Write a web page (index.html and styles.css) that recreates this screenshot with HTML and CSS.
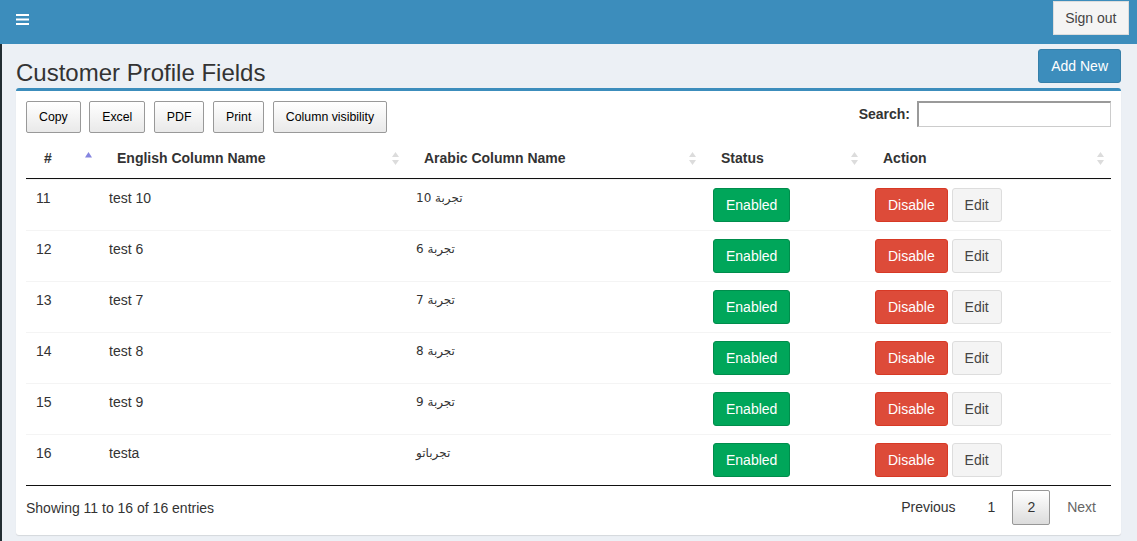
FILE: index.html
```html
<!DOCTYPE html>
<html>
<head>
<meta charset="utf-8">
<title>Customer Profile Fields</title>
<link rel="stylesheet" href="styles.css">
</head>
<body>
<header class="topbar">
  <a class="menu-toggle" href="#">
    <svg width="13" height="11" viewBox="0 0 13 11"><rect x="0" y="0" width="13" height="2" fill="#fff"/><rect x="0" y="4.5" width="13" height="2" fill="#fff"/><rect x="0" y="9" width="13" height="2" fill="#fff"/></svg>
  </a>
  <button class="btn btn-default signout">Sign out</button>
</header>
<main class="wrapper">
  <div class="content-header">
    <h1>Customer Profile Fields</h1>
    <button class="btn btn-primary">Add New</button>
  </div>
  <section class="box">
    <div class="toolbar">
      <div class="dt-buttons">
        <button class="dt-button">Copy</button>
        <button class="dt-button">Excel</button>
        <button class="dt-button">PDF</button>
        <button class="dt-button">Print</button>
        <button class="dt-button">Column visibility</button>
      </div>
      <label class="filter">Search: <input type="search"></label>
    </div>
    <table class="data">
      <colgroup><col class="c1"><col class="c2"><col class="c3"><col class="c4"><col class="c5"></colgroup>
      <thead>
        <tr>
          <th>#<span class="sort"><svg width="7" height="13" viewBox="0 0 7 13"><polygon points="3.5,0 7,5.5 0,5.5" fill="#8585e0"/></svg></span></th>
          <th>English Column Name<span class="sort"><svg width="7" height="13" viewBox="0 0 7 13"><polygon points="3.5,0 7,5 0,5" fill="#dcdcdc"/><polygon points="0,8 7,8 3.5,13" fill="#dcdcdc"/></svg></span></th>
          <th>Arabic Column Name<span class="sort"><svg width="7" height="13" viewBox="0 0 7 13"><polygon points="3.5,0 7,5 0,5" fill="#dcdcdc"/><polygon points="0,8 7,8 3.5,13" fill="#dcdcdc"/></svg></span></th>
          <th>Status<span class="sort"><svg width="7" height="13" viewBox="0 0 7 13"><polygon points="3.5,0 7,5 0,5" fill="#dcdcdc"/><polygon points="0,8 7,8 3.5,13" fill="#dcdcdc"/></svg></span></th>
          <th>Action<span class="sort"><svg width="7" height="13" viewBox="0 0 7 13"><polygon points="3.5,0 7,5 0,5" fill="#dcdcdc"/><polygon points="0,8 7,8 3.5,13" fill="#dcdcdc"/></svg></span></th>
        </tr>
      </thead>
      <tbody>
        <tr><td>11</td><td>test 10</td><td class="ar">تجربة 10</td><td><button class="btn btn-success">Enabled</button></td><td><button class="btn btn-danger">Disable</button> <button class="btn btn-default">Edit</button></td></tr>
        <tr><td>12</td><td>test 6</td><td class="ar">تجربة 6</td><td><button class="btn btn-success">Enabled</button></td><td><button class="btn btn-danger">Disable</button> <button class="btn btn-default">Edit</button></td></tr>
        <tr><td>13</td><td>test 7</td><td class="ar">تجربة 7</td><td><button class="btn btn-success">Enabled</button></td><td><button class="btn btn-danger">Disable</button> <button class="btn btn-default">Edit</button></td></tr>
        <tr><td>14</td><td>test 8</td><td class="ar">تجربة 8</td><td><button class="btn btn-success">Enabled</button></td><td><button class="btn btn-danger">Disable</button> <button class="btn btn-default">Edit</button></td></tr>
        <tr><td>15</td><td>test 9</td><td class="ar">تجربة 9</td><td><button class="btn btn-success">Enabled</button></td><td><button class="btn btn-danger">Disable</button> <button class="btn btn-default">Edit</button></td></tr>
        <tr><td>16</td><td>testa</td><td class="ar">تجرباتو</td><td><button class="btn btn-success">Enabled</button></td><td><button class="btn btn-danger">Disable</button> <button class="btn btn-default">Edit</button></td></tr>
      </tbody>
    </table>
    <div class="table-footer">
      <div class="info">Showing 11 to 16 of 16 entries</div>
      <div class="paginate">
        <a class="pg" href="#">Previous</a>
        <a class="pg" href="#">1</a>
        <a class="pg current" href="#">2</a>
        <a class="pg disabled" href="#">Next</a>
      </div>
    </div>
  </section>
</main>
</body>
</html>
```
FILE: styles.css
```css
* { box-sizing: border-box; }
html, body { margin: 0; height: 100%; overflow: hidden; }
body {
  font-family: "Liberation Sans", Arial, "DejaVu Sans", sans-serif;
  font-size: 14px;
  line-height: 20px;
  color: #333;
  background: #ecf0f5;
}
.topbar {
  height: 44px;
  background: #3c8dbc;
  display: flex;
  justify-content: space-between;
  align-items: flex-start;
}
.menu-toggle { display: block; margin: 14px 0 0 16px; line-height: 0; }
.btn {
  font-family: inherit;
  font-size: 14px;
  line-height: 20px;
  padding: 6px 12px;
  border: 1px solid transparent;
  border-radius: 3px;
  cursor: pointer;
  vertical-align: top;
}
.btn-default { background: #f4f4f4; border-color: #ddd; color: #444; }
.btn-primary { background: #3c8dbc; border-color: #367fa9; color: #fff; }
.btn-success { background: #00a65a; border-color: #008d4c; color: #fff; }
.btn-danger { background: #dd4b39; border-color: #d73925; color: #fff; }
.signout { margin: 1px 8px 0 0; border-radius: 0; height: 34px; padding: 6px 11.5px; }
.wrapper {
  height: calc(100% - 44px);
  border-left: 2px solid #222d32;
  padding: 0 16px 0 14px;
}
.content-header {
  display: flex;
  justify-content: space-between;
  align-items: flex-start;
  height: 44px;
}
.content-header h1 {
  margin: 16px 0 0 0;
  font-size: 24px;
  line-height: 26px;
  font-weight: normal;
  color: #333;
}
.content-header .btn { margin-top: 5px; height: 34px; }
.box {
  background: #fff;
  border-top: 3px solid #3c8dbc;
  border-radius: 3px;
  box-shadow: 0 1px 1px rgba(0,0,0,0.1);
  padding: 10px 10px 10px;
}
.toolbar { display: flex; justify-content: space-between; align-items: flex-start; height: 32px; }
.dt-buttons { display: flex; gap: 8.5px; }
.dt-button {
  font-family: inherit;
  font-size: 12.32px;
  height: 32px;
  padding: 0 12px;
  border: 1px solid #999;
  border-radius: 2px;
  background: linear-gradient(to bottom, #ffffff 0%, #e9e9e9 100%);
  color: #000;
}
.filter { font-weight: bold; display: flex; align-items: center; gap: 7px; height: 26px; }
.filter input {
  width: 194px;
  height: 26px;
  border: 1px solid #ccc;
  border-top: 2px solid #9a9a9a;
  border-left: 2px solid #9a9a9a;
  font-family: inherit;
  font-size: 14px;
  font-weight: normal;
}
table.data {
  width: 100%;
  table-layout: fixed;
  border-collapse: separate;
  border-spacing: 0;
  margin-top: 5px;
}
col.c1 { width: 73px; }
col.c2 { width: 307px; }
col.c3 { width: 297px; }
col.c4 { width: 162px; }
col.c5 { width: 246px; }
thead th {
  position: relative;
  text-align: left;
  font-weight: bold;
  padding: 10px 18px 10px 18px;
  border-bottom: 1px solid #111;
  white-space: nowrap;
}
.sort { position: absolute; right: 7px; top: 14px; line-height: 0; }
tbody td {
  vertical-align: top;
  padding: 8px 10px;
  border-top: 1px solid #f4f4f4;
}
tbody tr:last-child td { border-bottom: 1px solid #111; }
td.ar { font-family: "DejaVu Sans", sans-serif; font-size: 12px; }
.table-footer {
  display: flex;
  justify-content: space-between;
  align-items: center;
  margin-top: 4px;
  height: 35px;
}
.paginate { display: flex; }
.pg {
  display: block;
  padding: 7px 14px;
  margin-left: 2px;
  border: 1px solid transparent;
  border-radius: 2px;
  color: #333;
  text-decoration: none;
  line-height: 19px;
}
.pg.current {
  border-color: #979797;
  background: linear-gradient(to bottom, #ffffff 0%, #dcdcdc 100%);
}
.pg.disabled { color: #666; }
```
